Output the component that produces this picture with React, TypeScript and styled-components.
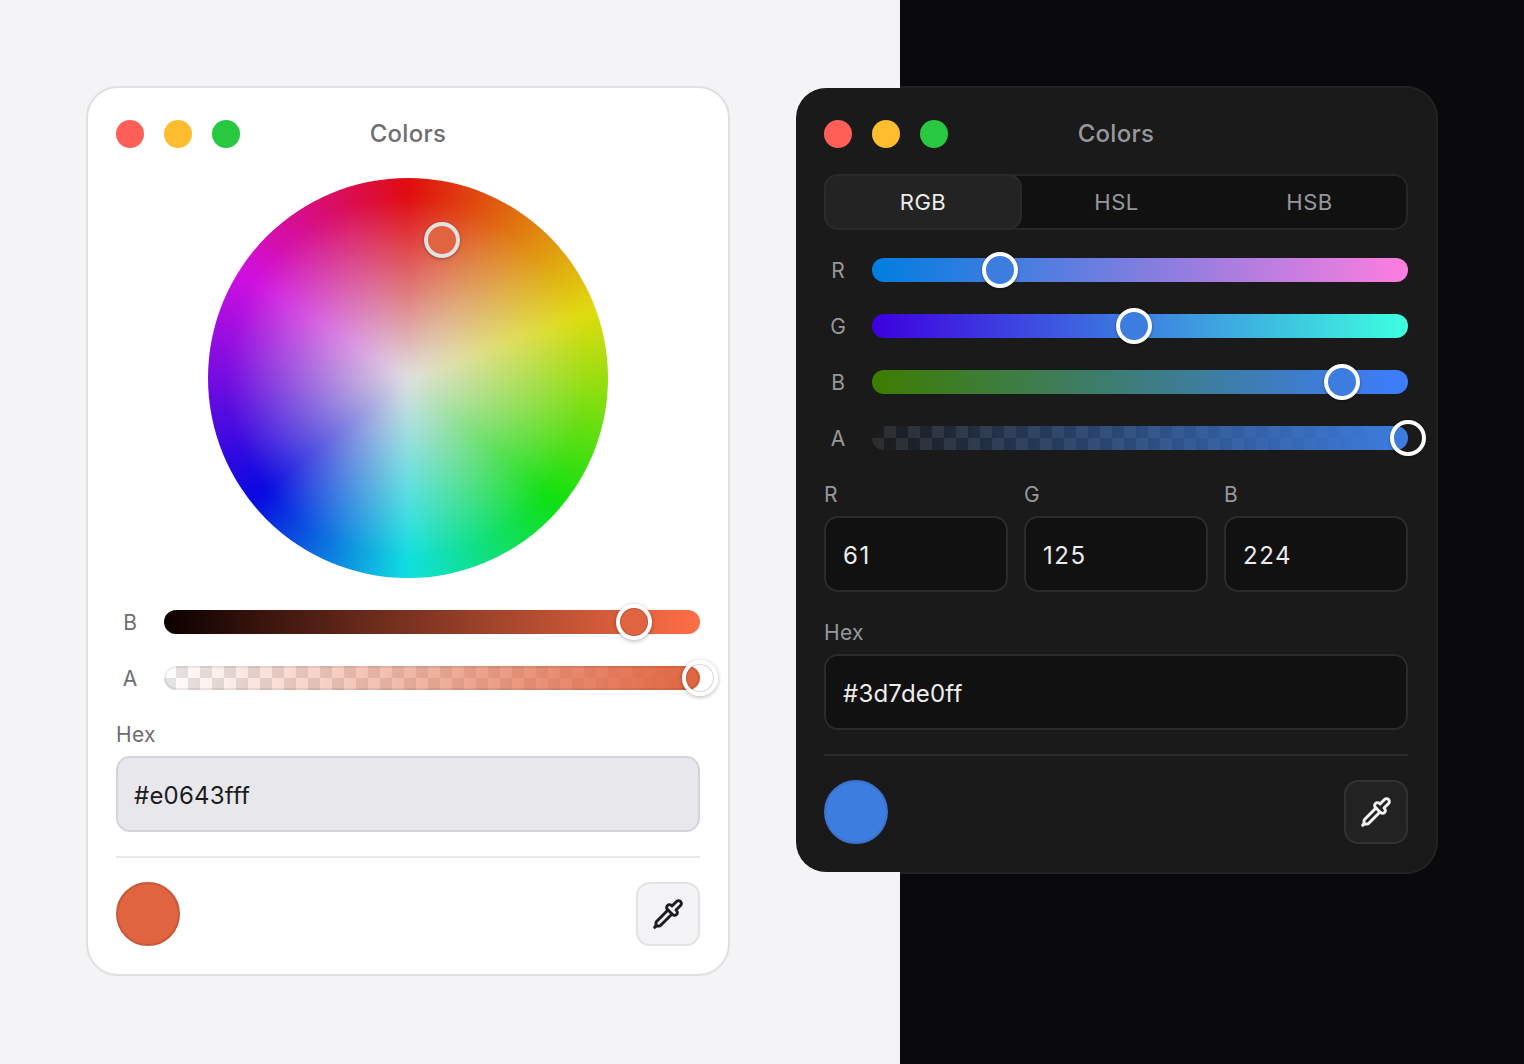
import { Pipette } from "lucide-react";
import styled, { createGlobalStyle } from "styled-components";

const GlobalStyle = createGlobalStyle`
  html, body {
    margin: 0;
    padding: 0;
  }
  body {
    font-family: Inter, "Noto Sans", sans-serif;
    background: #f4f4f6;
  }
`;

const Page = styled.div`
  display: flex;
  align-items: flex-start;
  gap: 64px;
  box-sizing: border-box;
  height: 1064px;
  padding: 86px;
  overflow: hidden;
  background: linear-gradient(90deg, #f4f4f6 900px, #0a0a0c 900px);
`;

const Card = styled.div<{ $dark?: boolean }>`
  box-sizing: border-box;
  flex: 0 0 644px;
  display: flex;
  flex-direction: column;
  padding: 32px 28px 28px;
  border-radius: 32px;
  border: 2px solid ${(p) => (p.$dark ? "rgba(255, 255, 255, 0.1)" : "#e0e0e2")};
  background: ${(p) => (p.$dark ? "#1a1a1a" : "#ffffff")};
  background-clip: padding-box;
`;

const Header = styled.div`
  position: relative;
  display: flex;
  align-items: center;
  justify-content: center;
  height: 28px;
`;

const Lights = styled.div`
  position: absolute;
  left: 0;
  top: 0;
  display: flex;
  gap: 20px;
`;

const Light = styled.span<{ $color: string }>`
  width: 28px;
  height: 28px;
  border-radius: 50%;
  background: ${(p) => p.$color};
`;

const Title = styled.div<{ $dark?: boolean }>`
  margin-top: -1px;
  font-size: 24px;
  font-weight: 500;
  letter-spacing: 0.3px;
  color: ${(p) => (p.$dark ? "#98989c" : "#6e6e70")};
`;

const Wheel = styled.div`
  position: relative;
  align-self: center;
  width: 400px;
  height: 400px;
  margin: 30px 0 32px;
  border-radius: 50%;
  overflow: hidden;

  &::before {
    content: "";
    position: absolute;
    inset: -20px;
    filter: blur(5px);
    background:
      radial-gradient(
        200px circle at center,
        #e0e0e0 0%,
        rgba(224, 224, 224, 0.55) 40%,
        rgba(224, 224, 224, 0) 90%
      ),
      conic-gradient(
        #e00c10 0deg,
        #e0dc10 70deg,
        #10e010 130deg,
        #10e0e0 180deg,
        #0808e0 232deg,
        #d010e0 302deg,
        #e00c10 360deg
      );
  }
`;

const WheelThumb = styled.div`
  position: absolute;
  left: 216px;
  top: 44px;
  box-sizing: border-box;
  width: 36px;
  height: 36px;
  border-radius: 50%;
  border: 4px solid #e2e2e2;
  background: #e0643f;
  box-shadow: 0 1px 3px rgba(0, 0, 0, 0.35);
`;

const Sliders = styled.div`
  display: flex;
  flex-direction: column;
  gap: 32px;
`;

const SliderRow = styled.div`
  display: flex;
  align-items: center;
  gap: 20px;
  height: 24px;
`;

const RowLabel = styled.span<{ $dark?: boolean }>`
  flex: 0 0 28px;
  box-sizing: border-box;
  height: 24px;
  padding-top: 1px;
  text-align: center;
  font-size: 21px;
  line-height: 24px;
  color: ${(p) => (p.$dark ? "#98989c" : "#6e6e70")};
`;

const Track = styled.div<{ $bg: string; $edge?: boolean }>`
  position: relative;
  flex: 1;
  height: 24px;
  border-radius: 12px;
  background: ${(p) => p.$bg};
  box-shadow: ${(p) => (p.$edge ? "inset 0 0 0 2px rgba(0, 0, 0, 0.07)" : "none")};
`;

const Thumb = styled.div<{ $pos: string; $dark?: boolean }>`
  position: absolute;
  left: ${(p) => p.$pos};
  top: 50%;
  box-sizing: border-box;
  width: 36px;
  height: 36px;
  border-radius: 50%;
  border: 4px solid #ffffff;
  transform: translate(-50%, -50%);
  box-shadow: ${(p) =>
    p.$dark
      ? "0 1px 3px rgba(0, 0, 0, 0.4)"
      : "0 1px 4px rgba(0, 0, 0, 0.3), inset 0 0 0 1px rgba(0, 0, 0, 0.18)"};
`;

const Thumbfill = styled(Thumb)<{ $fill: string }>`
  background: ${(p) => p.$fill};
`;

const FieldLabel = styled.div<{ $dark?: boolean }>`
  height: 28px;
  margin-bottom: 8px;
  padding-top: 1px;
  box-sizing: border-box;
  font-size: 21px;
  line-height: 28px;
  letter-spacing: 0.3px;
  color: ${(p) => (p.$dark ? "#98989c" : "#6e6e70")};
`;

const Field = styled.div<{ $dark?: boolean; $tracking: number }>`
  box-sizing: border-box;
  display: flex;
  align-items: center;
  height: 76px;
  padding: 2px 16px 0 ${(p) => (p.$dark ? 17 : 16)}px;
  border-radius: 14px;
  border: 2px solid ${(p) => (p.$dark ? "#2b2b2d" : "#d4d4d8")};
  background: ${(p) => (p.$dark ? "#111111" : "#e8e8ec")};
  color: ${(p) => (p.$dark ? "#ededed" : "#1c1c1e")};
  font-size: 24px;
  letter-spacing: ${(p) => p.$tracking}px;
`;

const HexBlock = styled.div<{ $gap: number }>`
  margin-top: ${(p) => p.$gap}px;
`;

const Divider = styled.div<{ $dark?: boolean }>`
  height: 2px;
  margin: 24px 0;
  background: ${(p) => (p.$dark ? "#2b2b2d" : "#e8e8ea")};
`;

const Footer = styled.div`
  display: flex;
  align-items: center;
  justify-content: space-between;
`;

const Swatch = styled.div<{ $color: string; $edge: string }>`
  box-sizing: border-box;
  width: 64px;
  height: 64px;
  border-radius: 50%;
  background: ${(p) => p.$color};
  border: 2px solid ${(p) => p.$edge};
`;

const IconButton = styled.button<{ $dark?: boolean }>`
  box-sizing: border-box;
  display: flex;
  align-items: center;
  justify-content: center;
  width: 64px;
  height: 64px;
  padding: 0;
  border-radius: 14px;
  border: 2px solid ${(p) => (p.$dark ? "#303134" : "#e2e2e4")};
  background: ${(p) => (p.$dark ? "#222222" : "#f4f4f6")};
  color: ${(p) => (p.$dark ? "#f4f4f4" : "#1c1c1e")};
`;

const Segments = styled.div`
  display: grid;
  grid-template-columns: 194px 1fr 1fr;
  box-sizing: border-box;
  height: 56px;
  margin: 26px 0 28px;
  border-radius: 14px;
  border: 2px solid #262628;
  background: #111111;
`;

const Segment = styled.div<{ $active?: boolean }>`
  display: flex;
  align-items: center;
  justify-content: center;
  border-radius: 12px;
  font-size: 22px;
  letter-spacing: 0.5px;
  color: ${(p) => (p.$active ? "#ededed" : "#98989c")};
  background: ${(p) => (p.$active ? "#232323" : "transparent")};
  box-shadow: ${(p) => (p.$active ? "0 0 0 2px #2a2a2a" : "none")};
`;

const ChannelGrid = styled.div`
  display: grid;
  grid-template-columns: repeat(3, 1fr);
  gap: 16px;
  margin-top: 30px;
`;

const checker = (a: string, b: string) =>
  `repeating-conic-gradient(${a} 0% 25%, ${b} 0% 50%) 0 0 / 24px 24px`;

const channels = [
  {
    label: "R",
    pos: "23.9%",
    bg: "linear-gradient(90deg, rgb(0,125,224), rgb(255,125,224))",
    value: "61",
  },
  {
    label: "G",
    pos: "48.9%",
    bg: "linear-gradient(90deg, rgb(61,0,224), rgb(61,255,224))",
    value: "125",
  },
  {
    label: "B",
    pos: "87.7%",
    bg: "linear-gradient(90deg, rgb(61,125,0), rgb(61,125,255))",
    value: "224",
  },
];

const TrafficLights = () => (
  <Lights>
    <Light $color="#ff5f57" />
    <Light $color="#febc2e" />
    <Light $color="#28c840" />
  </Lights>
);

const App = () => {
  return (
    <>
      <GlobalStyle />
      <Page>
        <Card>
          <Header>
            <TrafficLights />
            <Title>Colors</Title>
          </Header>
          <Wheel>
            <WheelThumb />
          </Wheel>
          <Sliders>
            <SliderRow>
              <RowLabel>B</RowLabel>
              <Track $bg="linear-gradient(90deg, #0c0000, #ff6f46)">
                <Thumbfill $pos="87.7%" $fill="#e0643f" />
              </Track>
            </SliderRow>
            <SliderRow>
              <RowLabel>A</RowLabel>
              <Track
                $edge
                $bg={`linear-gradient(90deg, rgba(224,100,63,0), #e0643f), ${checker(
                  "#e4e4e4",
                  "#ffffff"
                )}`}
              >
                <Thumb $pos="100%" />
              </Track>
            </SliderRow>
          </Sliders>
          <HexBlock $gap={30}>
            <FieldLabel>Hex</FieldLabel>
            <Field $tracking={0.2}>#e0643fff</Field>
          </HexBlock>
          <Divider />
          <Footer>
            <Swatch $color="#e0643f" $edge="#c8583a" />
            <IconButton>
              <Pipette size={32} strokeWidth={2.2} />
            </IconButton>
          </Footer>
        </Card>

        <Card $dark>
          <Header>
            <TrafficLights />
            <Title $dark>Colors</Title>
          </Header>
          <Segments>
            <Segment $active>RGB</Segment>
            <Segment>HSL</Segment>
            <Segment>HSB</Segment>
          </Segments>
          <Sliders>
            {channels.map((c) => (
              <SliderRow key={c.label}>
                <RowLabel $dark>{c.label}</RowLabel>
                <Track $bg={c.bg}>
                  <Thumbfill $dark $pos={c.pos} $fill="#3d7de0" />
                </Track>
              </SliderRow>
            ))}
            <SliderRow>
              <RowLabel $dark>A</RowLabel>
              <Track
                $bg={`linear-gradient(90deg, rgba(61,125,224,0), #3d7de0), ${checker(
                  "#2c2c2c",
                  "#1a1a1a"
                )}`}
              >
                <Thumb $dark $pos="100%" />
              </Track>
            </SliderRow>
          </Sliders>
          <ChannelGrid>
            {channels.map((c) => (
              <div key={c.label}>
                <FieldLabel $dark>{c.label}</FieldLabel>
                <Field $dark $tracking={1.6}>
                  {c.value}
                </Field>
              </div>
            ))}
          </ChannelGrid>
          <HexBlock $gap={26}>
            <FieldLabel $dark>Hex</FieldLabel>
            <Field $dark $tracking={0.2}>
              #3d7de0ff
            </Field>
          </HexBlock>
          <Divider $dark />
          <Footer>
            <Swatch $color="#3d7de0" $edge="#3a72cc" />
            <IconButton $dark>
              <Pipette size={32} strokeWidth={2.2} />
            </IconButton>
          </Footer>
        </Card>
      </Page>
    </>
  );
};

export default App;
